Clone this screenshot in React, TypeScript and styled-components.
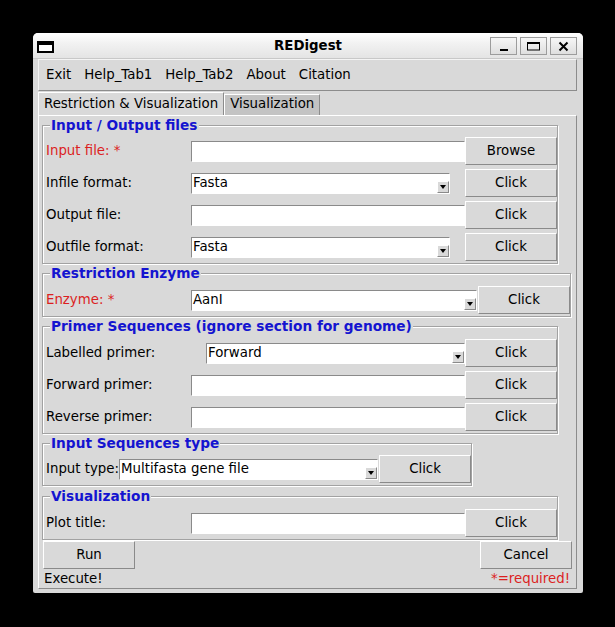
import React from 'react';
import styled, { createGlobalStyle } from 'styled-components';

const GlobalStyle = createGlobalStyle`
  html, body { margin: 0; padding: 0; background: #000; }
  body {
    font-family: "DejaVu Sans", "Noto Sans", sans-serif;
    font-size: 13.33px;
    color: #000;
  }
  #root { padding: 33px 0 0 33px; }
  * { box-sizing: border-box; }
`;

const Window = styled.div`
  width: 550px;
  height: 560px;
  background: #d9d9d9;
  border-radius: 5px 5px 2px 2px;
  overflow: hidden;
  display: flex;
  flex-direction: column;
`;

const TitleBar = styled.div`
  height: 26px;
  flex: none;
  display: grid;
  grid-template-columns: 1fr auto 1fr;
  align-items: center;
  background: linear-gradient(#ffffff, #f2f2f2 40%, #e4e4e4);
  border-bottom: 1px solid #c8c8c8;
`;

const TitleIcon = styled.div`
  justify-self: start;
  margin: 3px 0 0 4px;
  width: 17px;
  height: 12px;
  border: 2px solid #000;
  border-top-width: 4px;
  background: #fff;
`;

const TitleText = styled.div`
  font-weight: bold;
  font-size: 13.33px;
  line-height: 16px;
`;

const TitleButtons = styled.div`
  justify-self: end;
  display: flex;
  gap: 3px;
  padding-right: 6px;
`;

const TitleButton = styled.div`
  width: 27px;
  height: 18px;
  border: 1px solid #9c9c9c;
  background: linear-gradient(#f6f6f6, #dedede);
  display: flex;
  align-items: center;
  justify-content: center;
`;

const Body = styled.div`
  flex: 1;
  display: flex;
  flex-direction: column;
  padding: 0 6px 4px 5px;
`;

const MenuBar = styled.div`
  height: 32px;
  flex: none;
  display: flex;
  align-items: center;
  gap: 13px;
  padding: 0 0 0 7px;
  border-top: 1px solid #f4f4f4;
  border-left: 1px solid #f4f4f4;
  border-right: 1px solid #8c8c8c;
  border-bottom: 1px solid #8c8c8c;
`;

const MenuItem = styled.span`
  line-height: 16px;
`;

const TabStrip = styled.div`
  height: 24px;
  flex: none;
  display: flex;
  align-items: flex-end;
`;

const Tab = styled.div<{ $active?: boolean }>`
  height: ${(p) => (p.$active ? 23 : 21)}px;
  padding: ${(p) => (p.$active ? '3px 5px 0' : '1px 5px 0')};
  line-height: 16px;
  background: ${(p) => (p.$active ? '#d9d9d9' : '#c3c3c3')};
  border-top: 1px solid #ffffff;
  border-left: 1px solid #ffffff;
  border-right: 1px solid #8c8c8c;
  white-space: nowrap;
`;

const Panel = styled.div`
  flex: 1;
  display: flex;
  flex-direction: column;
  align-items: flex-start;
  padding: 1px 3px 0;
  border-top: 1px solid #ffffff;
  border-left: 1px solid #ffffff;
  border-right: 1px solid #8c8c8c;
  border-bottom: 1px solid #8c8c8c;
`;

const Group = styled.fieldset<{ $gap?: number; $padTop?: number }>`
  margin: ${(p) => p.$gap ?? 0}px 0 0 0;
  padding: ${(p) => p.$padTop ?? 2}px 0 0 3px;
  min-inline-size: 0;
  border: 1px solid #a2a2a2;
  box-shadow: inset 1px 1px 0 #ffffff, 1px 1px 0 #ffffff;
`;

const Legend = styled.legend`
  margin-left: 4px;
  padding: 0 1px;
  line-height: 16px;
  font-size: 13.7px;
  font-weight: bold;
  color: #1414d0;
  background: #d9d9d9;
`;

const FormGrid = styled.div<{ $cols: string }>`
  display: grid;
  grid-template-columns: ${(p) => p.$cols};
  grid-auto-rows: 32px;
  align-items: center;
`;

const FieldLabel = styled.span<{ $required?: boolean }>`
  line-height: 16px;
  white-space: nowrap;
  color: ${(p) => (p.$required ? '#dc1f1f' : '#000')};
`;

const Entry = styled.input`
  height: 21px;
  width: 100%;
  margin: 0;
  padding: 0 1px;
  font: inherit;
  color: #000;
  background: #fff;
  border: 1px solid #ffffff;
  border-top-color: #8a8a8a;
  border-left-color: #8a8a8a;
  outline: none;
`;

const Combo = styled.div<{ $w: number; $end?: boolean }>`
  height: 21px;
  width: ${(p) => p.$w}px;
  justify-self: ${(p) => (p.$end ? 'end' : 'start')};
  display: flex;
  align-items: flex-end;
  background: #fff;
  border: 1px solid #ffffff;
  border-top-color: #8a8a8a;
  border-left-color: #8a8a8a;
`;

const ComboText = styled.span`
  flex: 1;
  align-self: center;
  padding-left: 1px;
  line-height: 16px;
  white-space: nowrap;
`;

const ComboArrow = styled.div`
  width: 12px;
  height: 12px;
  flex: none;
  background: #d9d9d9;
  border-top: 1px solid #ffffff;
  border-left: 1px solid #ffffff;
  border-right: 1px solid #8a8a8a;
  border-bottom: 1px solid #8a8a8a;
  display: flex;
  align-items: center;
  justify-content: center;
`;

const Button = styled.div`
  height: 28px;
  width: 92px;
  display: flex;
  align-items: center;
  justify-content: center;
  line-height: 16px;
  background: #d9d9d9;
  border-top: 1px solid #ffffff;
  border-left: 1px solid #ffffff;
  border-right: 1px solid #8a8a8a;
  border-bottom: 1px solid #8a8a8a;
`;

const ActionRow = styled.div`
  align-self: stretch;
  margin-top: 1px;
  padding: 0 1px;
  display: flex;
  justify-content: space-between;
`;

const StatusRow = styled.div`
  align-self: stretch;
  margin-top: 2px;
  padding: 0 3px 0 2px;
  display: flex;
  justify-content: space-between;
  line-height: 16px;
`;

const Required = styled.span`
  color: #dc1f1f;
`;

const Arrow = () => (
  <ComboArrow>
    <svg width="6" height="4" viewBox="0 0 6 4">
      <path d="M0 0 H6 L3 4 Z" fill="#000" />
    </svg>
  </ComboArrow>
);

const ComboBox = ({ value, w, end }: { value: string; w: number; end?: boolean }) => (
  <Combo $w={w} $end={end}>
    <ComboText>{value}</ComboText>
    <Arrow />
  </Combo>
);

export default function App() {
  return (
    <>
      <GlobalStyle />
      <Window>
        <TitleBar>
          <TitleIcon />
          <TitleText>REDigest</TitleText>
          <TitleButtons>
            <TitleButton>
              <svg width="25" height="16" viewBox="0 0 25 16">
                <rect x="9" y="11" width="8" height="2" fill="#000" />
              </svg>
            </TitleButton>
            <TitleButton>
              <svg width="25" height="16" viewBox="0 0 25 16">
                <rect x="6.5" y="4.5" width="12" height="7.5" fill="none" stroke="#000" strokeWidth="1" />
                <rect x="6" y="4" width="13" height="2" fill="#000" />
              </svg>
            </TitleButton>
            <TitleButton>
              <svg width="25" height="16" viewBox="0 0 25 16">
                <path d="M8.5 4.5 L16.5 12.5 M16.5 4.5 L8.5 12.5" stroke="#000" strokeWidth="2" />
              </svg>
            </TitleButton>
          </TitleButtons>
        </TitleBar>
        <Body>
          <MenuBar>
            <MenuItem>Exit</MenuItem>
            <MenuItem>Help_Tab1</MenuItem>
            <MenuItem>Help_Tab2</MenuItem>
            <MenuItem>About</MenuItem>
            <MenuItem>Citation</MenuItem>
          </MenuBar>
          <TabStrip>
            <Tab $active>Restriction &amp; Visualization</Tab>
            <Tab>Visualization</Tab>
          </TabStrip>
          <Panel>
            <Group $padTop={2}>
              <Legend>Input / Output files</Legend>
              <FormGrid $cols="145px 274px 92px">
                <FieldLabel $required>Input file: *</FieldLabel>
                <Entry readOnly value="" />
                <Button>Browse</Button>
                <FieldLabel>Infile format:</FieldLabel>
                <ComboBox value="Fasta" w={259} />
                <Button>Click</Button>
                <FieldLabel>Output file:</FieldLabel>
                <Entry readOnly value="" />
                <Button>Click</Button>
                <FieldLabel>Outfile format:</FieldLabel>
                <ComboBox value="Fasta" w={259} />
                <Button>Click</Button>
              </FormGrid>
            </Group>
            <Group $gap={1} $padTop={3}>
              <Legend>Restriction Enzyme</Legend>
              <FormGrid $cols="145px 287px 92px">
                <FieldLabel $required>Enzyme: *</FieldLabel>
                <ComboBox value="AanI" w={286} />
                <Button>Click</Button>
              </FormGrid>
            </Group>
            <Group $gap={1} $padTop={3}>
              <Legend>Primer Sequences (ignore section for genome)</Legend>
              <FormGrid $cols="145px 274px 92px">
                <FieldLabel>Labelled primer:</FieldLabel>
                <ComboBox value="Forward" w={259} end />
                <Button>Click</Button>
                <FieldLabel>Forward primer:</FieldLabel>
                <Entry readOnly value="" />
                <Button>Click</Button>
                <FieldLabel>Reverse primer:</FieldLabel>
                <Entry readOnly value="" />
                <Button>Click</Button>
              </FormGrid>
            </Group>
            <Group $gap={1} $padTop={2}>
              <Legend>Input Sequences type</Legend>
              <FormGrid $cols="auto 260px 92px">
                <FieldLabel>Input type:</FieldLabel>
                <ComboBox value="Multifasta gene file" w={259} />
                <Button>Click</Button>
              </FormGrid>
            </Group>
            <Group $gap={2} $padTop={3}>
              <Legend>Visualization</Legend>
              <FormGrid $cols="145px 274px 92px">
                <FieldLabel>Plot title:</FieldLabel>
                <Entry readOnly value="" />
                <Button>Click</Button>
              </FormGrid>
            </Group>
            <ActionRow>
              <Button>Run</Button>
              <Button>Cancel</Button>
            </ActionRow>
            <StatusRow>
              <span>Execute!</span>
              <Required>*=required!</Required>
            </StatusRow>
          </Panel>
        </Body>
      </Window>
    </>
  );
}
